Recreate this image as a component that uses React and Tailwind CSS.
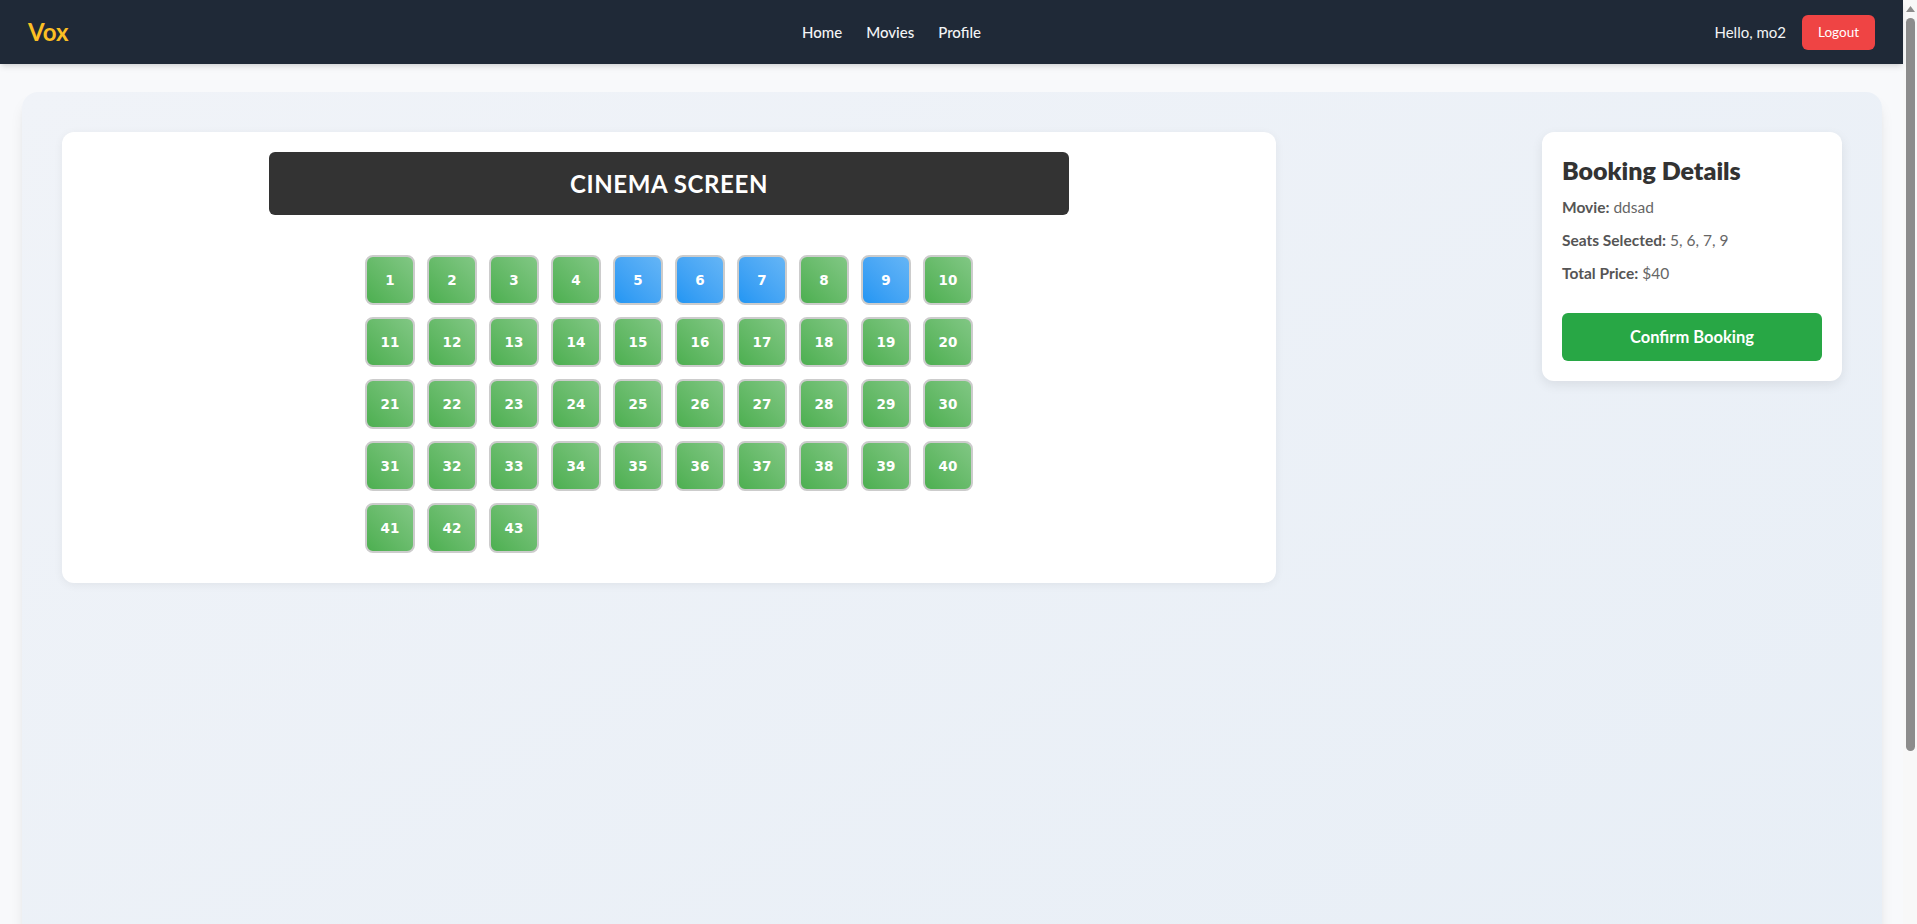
import React from 'react';

const selected = [5, 6, 7, 9];
const seats = Array.from({ length: 43 }, (_, i) => i + 1);

const Seat = ({ n }) => {
  const on = selected.includes(n);
  return (
    <button
      className={
        'w-[50px] h-[50px] rounded-lg border-2 border-[#cccccc] flex items-center justify-center text-white font-bold text-[13.5px] font-["DejaVu_Sans",sans-serif] bg-gradient-to-tr ' +
        (on ? 'from-[#2196f3] to-[#64b5f6]' : 'from-[#4caf50] to-[#81c784]')
      }
    >
      {n}
    </button>
  );
};

// fake browser scrollbar, the reference shows one on the right
const Scrollbar = () => (
  <div className="w-[14px] shrink-0 bg-[#f8f8f8] flex flex-col items-center">
    <div className="h-[18px] flex items-center justify-center">
      <svg width="9" height="6" viewBox="0 0 9 6">
        <polygon points="4.5,0 9,6 0,6" fill="#8c8c8c" />
      </svg>
    </div>
    <div className="w-[9px] h-[733px] rounded-full bg-[#8c8c8c]"></div>
  </div>
);

export default function App() {
  return (
    <div className="h-[924px] overflow-hidden flex bg-[#f8f9fb] font-['Lato',sans-serif]">
      <div className="flex-1 min-w-0">
        <nav className="relative z-10 h-16 bg-[#1f2937] px-7 flex items-center justify-between shadow-md">
          <span className="text-2xl font-bold text-[#fbbf24]">Vox</span>
          <div className="flex gap-6 text-[#f3f4f6] text-[15px] font-medium">
            <a href="#">Home</a>
            <a href="#">Movies</a>
            <a href="#">Profile</a>
          </div>
          <div className="flex items-center gap-4">
            <span className="text-[#f3f4f6] text-[15px]">Hello, mo2</span>
            <button className="bg-[#ef4444] text-white text-[13.5px] px-4 h-[35px] rounded-md">Logout</button>
          </div>
        </nav>

        <div className="pl-[22px] pt-7 pb-7">
          <div className="w-[1860px] min-h-[1005px] rounded-2xl bg-gradient-to-br from-[#f0f3f8] to-[#e7eef6] shadow-lg p-10 flex justify-between items-start">
            <div className="w-[1214px] bg-white rounded-xl shadow-[0_2px_10px_rgba(0,0,0,0.06)] pt-5 pb-[30px] flex flex-col items-center">
              <div className="w-[800px] h-[63px] bg-[#333333] rounded-md flex items-center justify-center text-white text-2xl font-bold tracking-wide">
                CINEMA SCREEN
              </div>
              <div className="mt-10 grid grid-cols-[repeat(10,50px)] gap-3">
                {seats.map(n => (
                  <Seat key={n} n={n} />
                ))}
              </div>
            </div>

            <div className="w-[300px] bg-white rounded-xl shadow-[0_4px_12px_rgba(0,0,0,0.08)] p-5">
              <h2 className="text-[25px] font-extrabold text-[#333333] mb-1.5">Booking Details</h2>
              <p className="text-[15.5px] text-[#666666] mb-2.5"><strong className="text-[#555555]">Movie:</strong> ddsad</p>
              <p className="text-[15.5px] text-[#666666] mb-2.5"><strong className="text-[#555555]">Seats Selected:</strong> {selected.join(', ')}</p>
              <p className="text-[15.5px] text-[#666666]"><strong className="text-[#555555]">Total Price:</strong> ${selected.length * 10}</p>
              <button className="mt-7 w-full h-12 bg-[#28a745] text-white font-bold text-[16.5px] rounded-md">Confirm Booking</button>
            </div>
          </div>
        </div>
      </div>
      <Scrollbar />
    </div>
  );
}
